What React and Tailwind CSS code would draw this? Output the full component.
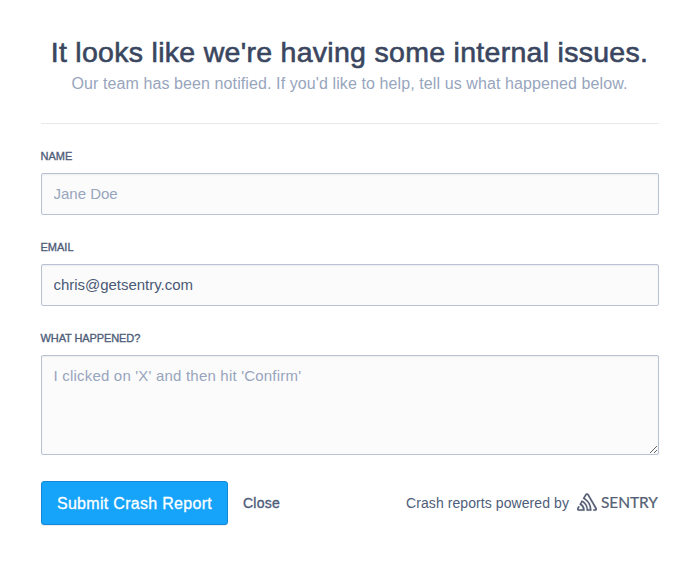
import { SiSentry } from "react-icons/si";

const label =
  "block h-[14px] text-[11px] leading-[14px] uppercase text-[#4e5d79] [-webkit-text-stroke:0.35px_#4e5d79]";
const control =
  "block w-full rounded-[2px] border border-[#b9c2d4] bg-[#fbfbfb] px-[11.5px] text-[15px] text-[#4a5975] placeholder:text-[#97a5bd] placeholder:opacity-100 shadow-[inset_0_1px_2px_rgba(0,0,0,0.06)] outline-none";

export default function App() {
  return (
    <main className="h-[562px] w-[699px] overflow-hidden bg-white pr-[40px] pl-[41px] pt-[36px] font-['Liberation_Sans',Arial,sans-serif]">
      <header className="h-[88px] border-b border-[#e6e8eb] text-center whitespace-nowrap">
        <h1 className="-ml-[1px] h-[34px] text-[28.5px] leading-[32px] tracking-[0.29px] text-[#3a4660] [-webkit-text-stroke:0.6px_#3a4660]">
          It looks like we're having some internal issues.
        </h1>
        <p className="-ml-[1px] h-[28px] text-[16px] leading-[28px] tracking-[0.1px] text-[#97a5bd]">
          Our team has been notified. If you'd like to help, tell us what happened below.
        </p>
      </header>
      <form>
        <div className="pt-[25px]">
          <label className={label + " -ml-[0.5px]"}>Name</label>
          <input className={control + " mt-[10px] h-[42px] pb-[2px]"} placeholder="Jane Doe" />
        </div>
        <div className="pt-[25px]">
          <label className={label + " -ml-[0.5px]"}>Email</label>
          <input
            className={control + " mt-[10px] h-[42px] pb-[2px] tracking-[-0.03px]"}
            defaultValue="chris@getsentry.com"
          />
        </div>
        <div className="pt-[25px]">
          <label className={label + " -ml-[0.5px] tracking-[-0.1px]"}>What happened?</label>
          <textarea
            className={control + " mt-[10px] h-[100px] resize pt-[11px] leading-[18px] tracking-[0.2px]"}
            placeholder="I clicked on 'X' and then hit 'Confirm'"
          />
        </div>
        <div className="mt-[26px] flex h-[44px] items-center whitespace-nowrap">
          <button
            type="button"
            className="h-[44px] w-[187px] rounded-[3px] border border-[#1388d6] bg-[#16a4fb] pt-[2px] text-[16px] tracking-[0.3px] text-white shadow-[0_1px_1px_rgba(0,0,0,0.08)] [-webkit-text-stroke:0.3px_white]"
          >
            Submit Crash Report
          </button>
          <button
            type="button"
            className="ml-[15px] text-[14px] tracking-[0.25px] text-[#4e5d79] [-webkit-text-stroke:0.35px_#4e5d79]"
          >
            Close
          </button>
          <p className="ml-auto flex items-center text-[14px] text-[#4e5d79]">
            <span className="tracking-[0.08px]">Crash reports powered by</span>
            <SiSentry className="-mt-[2px] ml-[8px] h-[20px] w-[20px] stroke-[#555f73] stroke-[0.2] text-[#555f73]" />
            <span className="-mt-[1px] ml-[4px] w-[58px] font-['Lato',sans-serif] text-[15.5px] tracking-[-0.1px] text-[#555f73] [-webkit-text-stroke:0.2px_#555f73]">
              SENTRY
            </span>
          </p>
        </div>
      </form>
    </main>
  );
}
